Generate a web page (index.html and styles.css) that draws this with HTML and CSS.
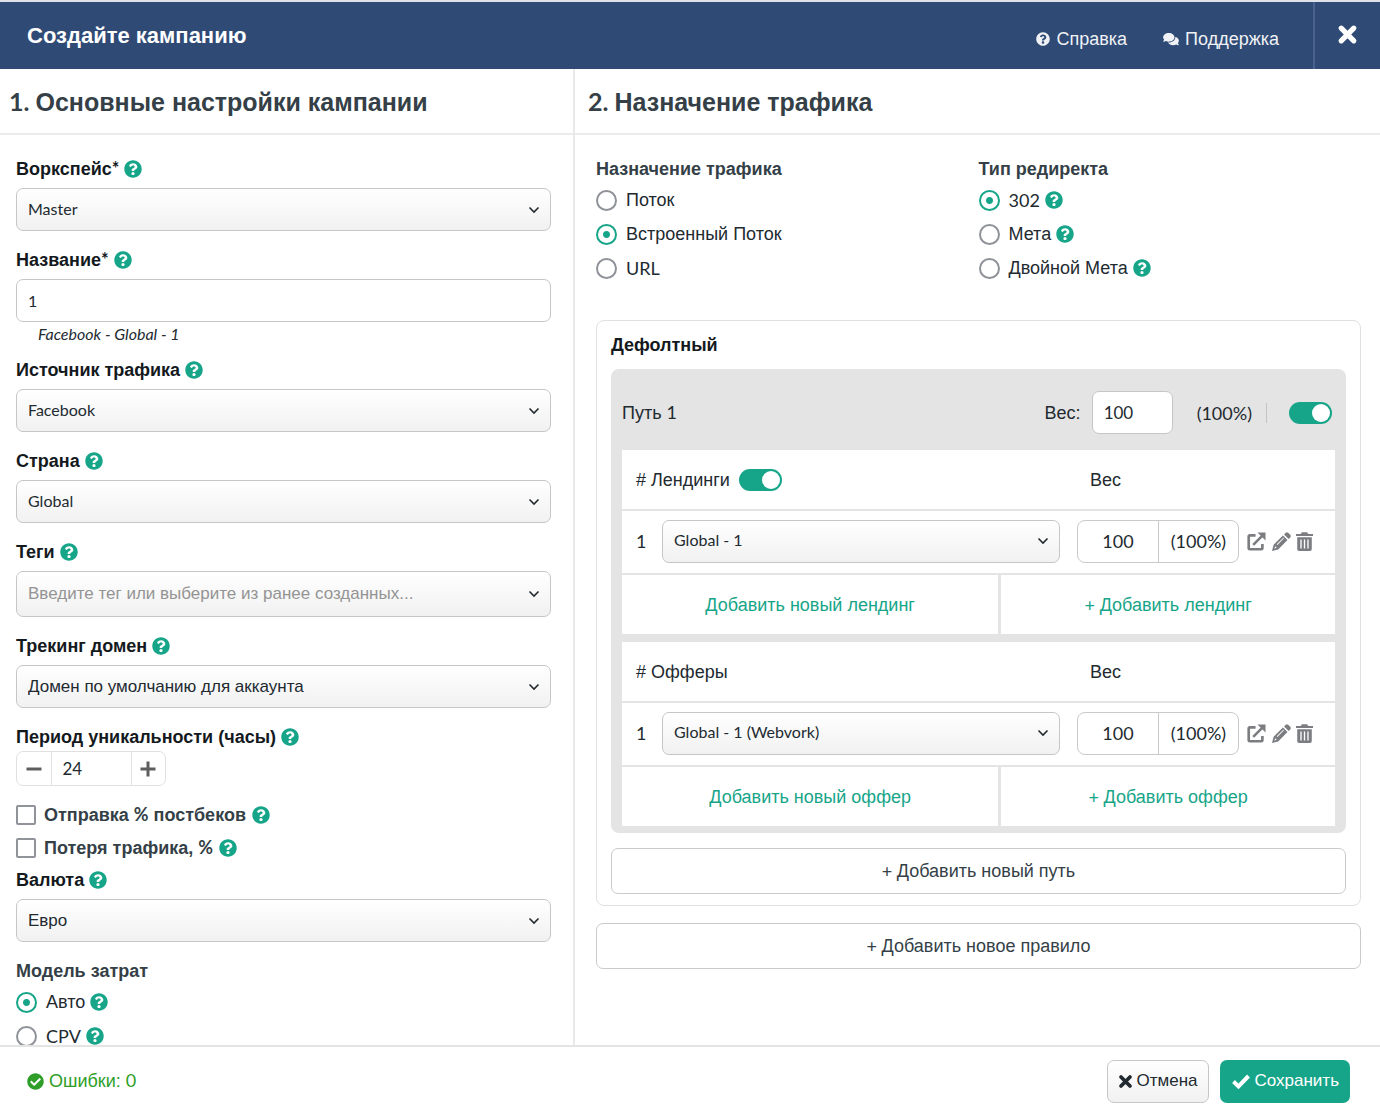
FILE: index.html
```html
<!DOCTYPE html>
<html lang="ru">
<head>
<meta charset="utf-8">
<meta name="viewport" content="width=device-width, initial-scale=1">
<title>Создайте кампанию</title>
<link rel="stylesheet" href="styles.css">
</head>
<body>
<svg class="sprite" aria-hidden="true">
  <symbol id="question" viewBox="0 0 512 512"><path d="M504 256c0 137-111 248-248 248S8 393 8 256 119 8 256 8s248 111 248 248zM262.700 90c-54.500 0-89.300 23-116.500 63.800-3.500 5.300-2.400 12.400 2.700 16.300l34.700 26.300c5.200 3.900 12.600 3 16.700-2.100 17.900-22.700 30.100-35.800 57.300-35.800 20.400 0 45.700 13.100 45.700 33 0 15-12.400 22.700-32.500 34C247.100 238.500 216 254.900 216 296v4c0 6.600 5.400 12 12 12h56c6.600 0 12-5.400 12-12v-1.300c0-28.500 83.200-29.600 83.200-106.700 0-58-60.200-102-116.500-102zM256 338c-25.400 0-46 20.600-46 46s20.600 46 46 46 46-20.600 46-46-20.600-46-46-46z"/></symbol>
  <symbol id="comments" viewBox="0 0 576 512"><path d="M416 192c0-88.400-93.100-160-208-160S0 103.600 0 192c0 34.300 14.100 65.900 38 92-13.400 30.200-35.500 54.200-35.800 54.500-2.200 2.300-2.800 5.700-1.500 8.700S4.800 352 8 352c36.600 0 66.900-12.300 88.700-25 32.200 15.700 70.300 25 111.300 25 114.900 0 208-71.600 208-160zm122 220c23.900-26 38-57.700 38-92 0-66.900-53.500-124.200-129.300-148.100.9 6.600 1.300 13.300 1.300 20.100 0 105.900-107.700 192-240 192-10.800 0-21.300-.8-31.700-1.900C207.800 439.600 281.800 480 368 480c41 0 79.100-9.200 111.300-25 21.800 12.700 52.100 25 88.700 25 3.200 0 6.100-1.900 7.300-4.800 1.300-2.900.7-6.300-1.500-8.700-.3-.3-22.400-24.200-35.800-54.500z"/></symbol>
  <symbol id="cross" viewBox="0 0 20 20"><path d="M4 4L16 16M16 4L4 16" fill="none" stroke="currentColor" stroke-width="5" stroke-linecap="round"/></symbol>
  <symbol id="check" viewBox="0 0 20 20"><path d="M2.500 10.500L7.500 15.500L17.500 5" fill="none" stroke="currentColor" stroke-width="4"/></symbol>
  <symbol id="check-circle" viewBox="0 0 512 512"><path fill-rule="evenodd" d="M504 256c0 137-111 248-248 248S8 393 8 256 119 8 256 8s248 111 248 248zM227.300 387.300l184-184c6.200-6.200 6.200-16.400 0-22.600l-22.600-22.600c-6.200-6.200-16.400-6.200-22.600 0L216 308.100l-70.100-70.100c-6.200-6.200-16.400-6.200-22.600 0l-22.600 22.600c-6.200 6.200-6.200 16.400 0 22.600l104 104c6.200 6.300 16.400 6.300 22.600.1z"/></symbol>
  <symbol id="chevron" viewBox="0 0 12 8"><path d="M1.500 1.500L6 6L10.500 1.500" fill="none" stroke="currentColor" stroke-width="1.600"/></symbol>
  <symbol id="external" viewBox="0 0 20 20"><path d="M9 3.500H3Q1.800 3.500 1.800 4.700V17Q1.800 18.200 3 18.200H15Q16.200 18.200 16.200 17V12.500M6.500 13.500L16.500 3.500" fill="none" stroke="currentColor" stroke-width="2.800"/><path d="M11 .5H19.500V9Z"/></symbol>
  <symbol id="pencil" viewBox="0 0 20 20"><path fill-rule="evenodd" d="M11.500 3.700L16.300 8.500L6.500 18.300L0 20L1.700 13.500ZM3.300 15L2.600 17.400L5 16.700ZM11.900 6L5 12.900L5.700 13.600L12.600 6.700Z"/><path d="M12.700 2.500L14.500 .7Q15.700 -.3 17 .8L19.200 3Q20.300 4.300 19.300 5.500L17.500 7.300Z"/></symbol>
  <symbol id="trash" viewBox="0 0 18 20"><path fill-rule="evenodd" d="M0 2H5L6.300 .2H11.700L13 2H18V4.300H0ZM1.300 5.500H16.700V18Q16.700 20 14.800 20H3.200Q1.300 20 1.300 18ZM4.600 8V17.300H6V8ZM8.300 8V17.300H9.700V8ZM12 8V17.300H13.400V8Z"/></symbol>
  <symbol id="minus" viewBox="0 0 16 16"><path d="M0.500 6.500H15.500V9.500H0.500Z"/></symbol>
  <symbol id="plus" viewBox="0 0 16 16"><path d="M6.500 .5H9.500V6.500H15.500V9.500H9.500V15.500H6.500V9.500H.5V6.500H6.500Z"/></symbol>
</svg>

<div class="dialog">
  <header class="topbar">
    <h1 class="topbar-title">Создайте кампанию</h1>
    <nav class="topbar-links">
      <a class="topbar-link" href="#help"><svg class="icon-link"><use href="#question"/></svg>Справка</a>
      <a class="topbar-link" href="#support"><svg class="icon-chat"><use href="#comments"/></svg>Поддержка</a>
    </nav>
    <button class="close" type="button" aria-label="Закрыть"><svg class="icon-close"><use href="#cross"/></svg></button>
  </header>

  <main class="columns">
    <section class="column column-settings">
      <h2 class="column-title"><span class="lato">1. </span>Основные настройки кампании</h2>
      <form class="settings">
        <div class="field">
          <div class="label-row"><label for="workspace">Воркспейс<span class="lato">*</span></label><svg class="help"><use href="#question"/></svg></div>
          <div class="select"><select class="control control-latin" id="workspace"><option>Master</option></select><svg class="chevron"><use href="#chevron"/></svg></div>
        </div>
        <div class="field field-hinted">
          <div class="label-row"><label for="name">Название<span class="lato">*</span></label><svg class="help"><use href="#question"/></svg></div>
          <input class="control control-latin control-plain" id="name" type="text" value="1">
          <p class="hint">Facebook - Global - 1</p>
        </div>
        <div class="field">
          <div class="label-row"><label for="source">Источник трафика</label><svg class="help"><use href="#question"/></svg></div>
          <div class="select"><select class="control control-latin" id="source"><option>Facebook</option></select><svg class="chevron"><use href="#chevron"/></svg></div>
        </div>
        <div class="field">
          <div class="label-row"><label for="country">Страна</label><svg class="help"><use href="#question"/></svg></div>
          <div class="select"><select class="control control-latin" id="country"><option>Global</option></select><svg class="chevron"><use href="#chevron"/></svg></div>
        </div>
        <div class="field">
          <div class="label-row"><label for="tags">Теги</label><svg class="help"><use href="#question"/></svg></div>
          <div class="select"><input class="control control-tall" id="tags" type="text" placeholder="Введите тег или выберите из ранее созданных..."><svg class="chevron"><use href="#chevron"/></svg></div>
        </div>
        <div class="field">
          <div class="label-row"><label for="domain">Трекинг домен</label><svg class="help"><use href="#question"/></svg></div>
          <div class="select"><select class="control" id="domain"><option>Домен по умолчанию для аккаунта</option></select><svg class="chevron"><use href="#chevron"/></svg></div>
        </div>
        <div class="field field-period">
          <div class="label-row label-tight"><label for="period">Период уникальности (часы)</label><svg class="help"><use href="#question"/></svg></div>
          <div class="stepper">
            <button class="step" type="button" aria-label="Меньше"><svg class="icon-step"><use href="#minus"/></svg></button>
            <input class="step-value" id="period" type="text" value="24">
            <button class="step" type="button" aria-label="Больше"><svg class="icon-step"><use href="#plus"/></svg></button>
          </div>
        </div>
        <div class="checks">
          <div class="check-row"><input class="checkbox" type="checkbox" id="postbacks"><label for="postbacks">Отправка <span class="lato">%</span> постбеков</label><svg class="help"><use href="#question"/></svg></div>
          <div class="check-row"><input class="checkbox" type="checkbox" id="loss"><label for="loss">Потеря трафика, <span class="lato">%</span></label><svg class="help"><use href="#question"/></svg></div>
        </div>
        <div class="field">
          <div class="label-row"><label for="currency">Валюта</label><svg class="help"><use href="#question"/></svg></div>
          <div class="select"><select class="control" id="currency"><option>Евро</option></select><svg class="chevron"><use href="#chevron"/></svg></div>
        </div>
        <fieldset class="radios">
          <legend class="legend">Модель затрат</legend>
          <div class="radio-row"><input class="radio" type="radio" name="cost" id="cost-auto" checked><label for="cost-auto">Авто</label><svg class="help help-near"><use href="#question"/></svg></div>
          <div class="radio-row"><input class="radio" type="radio" name="cost" id="cost-cpv"><label class="lato" for="cost-cpv">CPV</label><svg class="help help-near"><use href="#question"/></svg></div>
        </fieldset>
      </form>
    </section>

    <section class="column column-traffic">
      <h2 class="column-title column-title-wide"><span class="lato">2. </span>Назначение трафика</h2>
      <form class="traffic">
        <div class="choices">
          <fieldset class="radios">
            <legend class="legend">Назначение трафика</legend>
            <div class="radio-row"><input class="radio" type="radio" name="target" id="t-flow"><label for="t-flow">Поток</label></div>
            <div class="radio-row"><input class="radio" type="radio" name="target" id="t-inner" checked><label for="t-inner">Встроенный Поток</label></div>
            <div class="radio-row"><input class="radio" type="radio" name="target" id="t-url"><label class="lato" for="t-url">URL</label></div>
          </fieldset>
          <fieldset class="radios">
            <legend class="legend">Тип редиректа</legend>
            <div class="radio-row"><input class="radio" type="radio" name="redirect" id="r-302" checked><label class="lato" for="r-302">302</label><svg class="help help-near"><use href="#question"/></svg></div>
            <div class="radio-row"><input class="radio" type="radio" name="redirect" id="r-meta"><label for="r-meta">Мета</label><svg class="help help-near"><use href="#question"/></svg></div>
            <div class="radio-row"><input class="radio" type="radio" name="redirect" id="r-double"><label for="r-double">Двойной Мета</label><svg class="help help-near"><use href="#question"/></svg></div>
          </fieldset>
        </div>

        <div class="rule">
          <h3 class="rule-title">Дефолтный</h3>
          <div class="path">
            <div class="path-head">
              <span class="path-name">Путь <span class="lato">1</span></span>
              <label for="path-weight">Вес:</label>
              <input class="control control-latin control-plain path-weight" id="path-weight" type="text" value="100">
              <span class="path-share lato">(100%)</span>
              <input class="switch" type="checkbox" aria-label="Путь 1" checked>
            </div>

            <div class="group">
              <div class="group-head">
                <span class="group-name"><label for="landings"># Лендинги</label><input class="switch" id="landings" type="checkbox" checked></span>
                <span>Вес</span>
              </div>
              <div class="group-item">
                <span class="lato">1</span>
                <div class="select"><select class="control control-latin" aria-label="Лендинг"><option>Global - 1</option></select><svg class="chevron"><use href="#chevron"/></svg></div>
                <div class="weight lato"><input class="weight-value lato" type="text" value="100" aria-label="Вес лендинга"><span class="weight-share">(100%)</span></div>
                <div class="actions">
                  <button class="action" type="button" aria-label="Открыть"><svg class="icon-action"><use href="#external"/></svg></button>
                  <button class="action" type="button" aria-label="Изменить"><svg class="icon-action"><use href="#pencil"/></svg></button>
                  <button class="action" type="button" aria-label="Удалить"><svg class="icon-trash"><use href="#trash"/></svg></button>
                </div>
              </div>
              <div class="group-add">
                <button class="add" type="button">Добавить новый лендинг</button>
                <button class="add" type="button"><span class="lato">+ </span>Добавить лендинг</button>
              </div>
            </div>

            <div class="group">
              <div class="group-head">
                <span class="group-name"># Офферы</span>
                <span>Вес</span>
              </div>
              <div class="group-item">
                <span class="lato">1</span>
                <div class="select"><select class="control control-latin" aria-label="Оффер"><option>Global - 1 (Webvork)</option></select><svg class="chevron"><use href="#chevron"/></svg></div>
                <div class="weight lato"><input class="weight-value lato" type="text" value="100" aria-label="Вес оффера"><span class="weight-share">(100%)</span></div>
                <div class="actions">
                  <button class="action" type="button" aria-label="Открыть"><svg class="icon-action"><use href="#external"/></svg></button>
                  <button class="action" type="button" aria-label="Изменить"><svg class="icon-action"><use href="#pencil"/></svg></button>
                  <button class="action" type="button" aria-label="Удалить"><svg class="icon-trash"><use href="#trash"/></svg></button>
                </div>
              </div>
              <div class="group-add">
                <button class="add" type="button">Добавить новый оффер</button>
                <button class="add" type="button"><span class="lato">+ </span>Добавить оффер</button>
              </div>
            </div>
          </div>
          <button class="wide-button" type="button"><span class="lato">+ </span>Добавить новый путь</button>
        </div>
        <button class="wide-button" type="button"><span class="lato">+ </span>Добавить новое правило</button>
      </form>
    </section>
  </main>

  <footer class="footer">
    <p class="errors"><svg class="icon-status"><use href="#check-circle"/></svg><span>Ошибки: <span class="lato">0</span></span></p>
    <button class="button button-cancel" type="button"><svg class="icon-cancel"><use href="#cross"/></svg>Отмена</button>
    <button class="button button-save" type="button"><svg class="icon-save"><use href="#check"/></svg>Сохранить</button>
  </footer>
</div>
</body>
</html>
```
FILE: styles.css
```css
*, *::before, *::after { box-sizing: border-box; }

body {
  margin: 0;
  font: 18px/28px "Liberation Sans", Arial, sans-serif;
  color: #222a30;
  background: #fff;
}

h1, h2, h3, p, fieldset, legend { margin: 0; padding: 0; border: 0; font-size: inherit; }
button, input, select { font: inherit; color: inherit; margin: 0; padding: 0; border: 0; background: none; }
button { cursor: pointer; display: inline-flex; align-items: center; justify-content: center; white-space: pre; }
svg { fill: currentColor; display: block; flex: none; }

.sprite { display: none; }
.lato { font-family: Lato, sans-serif; line-height: 20px; }

.dialog { display: flex; flex-direction: column; height: 100vh; }

/* Top bar */
.topbar {
  flex: none;
  display: flex;
  align-items: stretch;
  height: 69px;
  border-top: 2px solid #dfe2e8;
  background: #2f4a75;
  color: #fff;
}
.topbar-title { flex: 1; padding: 20px 27px; font-size: 22px; }
.topbar-links { display: flex; gap: 36px; padding: 23px 34px; }
.topbar-link { display: flex; align-items: center; gap: 6px; height: 28px; color: #f0f2f5; text-decoration: none; }
.icon-link { width: 14px; height: 14px; }
.icon-chat { width: 16px; height: 14px; }
.close { width: 67px; padding-bottom: 2px; border-left: 2px solid #4a6290; }
.icon-close { width: 21px; height: 21px; }

/* Columns */
.columns { flex: 1; min-height: 0; display: flex; }
.column { display: flex; flex-direction: column; min-height: 0; }
.column-settings { width: 575px; border-right: 2px solid #e9e9e9; }
.column-traffic { flex: 1; min-width: 0; }
.column-title {
  flex: none;
  height: 66px;
  padding: 0 9px;
  border-bottom: 2px solid #ebebeb;
  font-size: 25px;
  line-height: 66px;
  color: #353f47;
  white-space: pre;
}
.column-title-wide { padding: 0 13px; }
.settings { flex: 1; min-height: 0; overflow: hidden; padding: 20px 22px 0 16px; }
.traffic { flex: 1; min-height: 0; overflow: hidden; padding: 20px 19px 0 21px; }

/* Fields */
.field { margin-bottom: 15px; }
.field-hinted { margin-bottom: 10px; }
.field-period { margin-bottom: 12px; }
.label-row { display: flex; align-items: center; gap: 5px; height: 28px; margin-bottom: 5px; font-weight: bold; color: #14191d; }
.label-tight { margin-bottom: 0; }
.help { width: 18px; height: 18px; color: #17a589; }
.help-near { margin-left: -4px; }
.hint { padding-left: 22px; font: italic 16px/24px Lato, sans-serif; }

.control {
  display: block;
  width: 100%;
  height: 43px;
  padding: 0 11px;
  border: 1px solid #c6c6c6;
  border-radius: 7px;
  background: linear-gradient(#fff, #f1f1f1);
  font-size: 17px;
  appearance: none;
}
.control-latin { padding-bottom: 2px; font-family: Lato, sans-serif; font-size: 16px; }
.control-plain { padding-bottom: 0; background: #fff; }
.control-tall { height: 46px; }
.control::placeholder { color: #949494; opacity: 1; }
.select { display: grid; align-items: center; }
.select > * { grid-area: 1 / 1; }
.chevron { width: 12px; height: 8px; justify-self: end; margin-right: 11px; pointer-events: none; }

.stepper { display: flex; width: 150px; height: 35px; border: 1px solid #e0e0e0; border-radius: 7px; }
.step { flex: 1; color: #5e5e5e; }
.icon-step { width: 16px; height: 16px; }
.step-value { width: 81px; padding: 0 11px; border: solid #e0e0e0; border-width: 0 1px; font: 17px/20px Lato, sans-serif; }

.checks { margin-bottom: 2px; }
.check-row { display: flex; align-items: center; gap: 6px; height: 33px; font-weight: bold; color: #353f47; }
.checkbox { appearance: none; width: 20px; height: 20px; margin-right: 2px; border: 2px solid #90939a; border-radius: 2px; }

.legend { font-weight: bold; color: #353f47; }
.radio-row { display: flex; align-items: center; gap: 9px; height: 34px; }
.radio { appearance: none; flex: none; width: 21px; height: 21px; border: 2px solid #8f9299; border-radius: 50%; background: #fff; }
.radio:checked { border-color: #17a589; background: radial-gradient(circle, #17a589 3px, #fff 4px); }

/* Traffic */
.choices { display: grid; grid-template-columns: 1fr 1fr; margin-bottom: 35px; }
.rule { margin-bottom: 17px; padding: 10px 14px 11px; border: 1px solid #e0e0e0; border-radius: 8px; }
.rule-title { margin-bottom: 10px; color: #14191d; }
.path { display: grid; gap: 8px; margin-bottom: 15px; padding: 0 11px 7px; border-radius: 8px; background: #e4e4e4; }
.path-head { display: flex; align-items: center; height: 81px; margin-bottom: -8px; padding: 6px 3px 0 0; }
.path-name { flex: 1; }
.path-weight { width: 81px; margin: 0 24px 0 11px; font-size: 17px; }
.path-share { margin-right: 22px; padding-right: 14px; border-right: 1px solid #c4c4c4; }

.switch { appearance: none; flex: none; width: 43px; height: 22px; padding: 2px; border-radius: 11px; background: #17a589; }
.switch::before { content: ""; display: block; width: 18px; height: 18px; border-radius: 50%; background: #fff; }
.switch:checked::before { margin-left: auto; }

.group { display: grid; gap: 2px; }
.group-head { display: grid; grid-template-columns: 1fr 245px; align-items: center; height: 59px; padding-left: 14px; background: #fff; }
.group-name { display: flex; align-items: center; gap: 9px; }
.group-item {
  display: grid;
  grid-template-columns: 26px 1fr 162px 74px;
  align-items: center;
  height: 62px;
  padding: 0 22px 2px 14px;
  background: #fff;
}
.group-item .select { margin-right: 17px; }
.weight { display: flex; align-items: stretch; height: 43px; border: 1px solid #cacaca; border-radius: 8px; }
.weight-value { width: 81px; border-right: 1px solid #cacaca; text-align: center; }
.weight-share { flex: 1; line-height: 41px; text-align: center; }
.actions { display: flex; justify-content: space-between; padding-left: 8px; color: #7b7d80; }
.icon-action { width: 19px; height: 19px; }
.icon-trash { width: 17px; height: 19px; }
.group-add { display: grid; grid-template-columns: 53fr 47fr; gap: 3px; height: 59px; }
.add { background: #fff; color: #17a589; }

.wide-button { width: 100%; height: 46px; border: 1px solid #cacaca; border-radius: 7px; color: #353f47; }

/* Footer */
.footer { flex: none; display: flex; align-items: center; height: 72px; padding: 0 30px 2px 27px; border-top: 2px solid #e4e4e4; }
.errors { flex: 1; display: flex; align-items: center; gap: 5px; color: #2e9e28; }
.icon-status { width: 17px; height: 17px; }
.button { height: 43px; padding: 0 11px; gap: 4px; border-radius: 7px; font-size: 17px; }
.button-cancel { margin-right: 11px; padding: 0 10px; border: 1px solid #c6c6c6; background: linear-gradient(#fff, #f1f1f1); }
.button-save { background: #17a589; color: #fff; }
.icon-cancel { width: 15px; height: 15px; }
.icon-save { width: 20px; height: 20px; }
```
